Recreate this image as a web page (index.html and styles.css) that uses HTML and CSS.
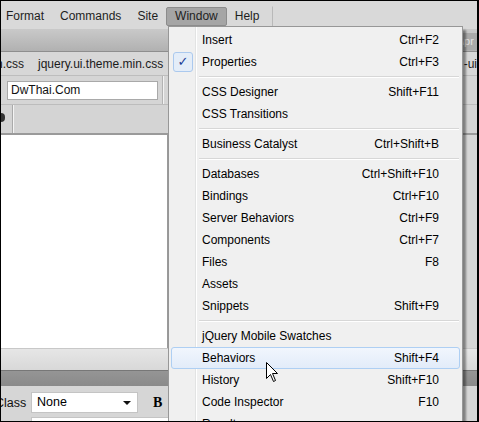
FILE: index.html
```html
<!DOCTYPE html>
<html lang="en">
<head>
    <meta charset="UTF-8">
    <title>Window menu</title>
    <link rel="stylesheet" href="styles.css">
</head>
<body>
    <div class="screen">
        <div class="menubar">
            <span class="top-item first">Format</span>
            <span class="top-item">Commands</span>
            <span class="top-item">Site</span>
            <span class="top-item open">Window</span>
            <span class="top-item last">Help</span>
        </div>

        <div class="toolbar">
            <span class="path-tab">\pr</span>
        </div>

        <div class="tabs">
            <span class="tab cut">n.css</span>
            <span class="tab">jquery.ui.theme.min.css</span>
            <span class="tab-spacer"></span>
            <span class="tab right">-ui-</span>
        </div>

        <div class="address">
            <div class="title-box">DwThai.Com</div>
            <div class="address-rest"></div>
        </div>

        <div class="tools">
            <span class="gear"></span>
            <span class="tools-rest"></span>
        </div>

        <div class="document"></div>

        <div class="statusbar"></div>
        <div class="panel-head"></div>

        <div class="props">
            <div class="props-row">
                <span class="lbl">Class</span>
                <div class="select">None <span class="arrow"></span></div>
                <span class="bold-btn">B</span>
            </div>
            <div class="props-row">
                <span class="lbl"></span>
                <div class="field"></div>
            </div>
        </div>

        <!-- dropdown for the Window menu -->
        <div class="dropdown">
            <div class="item"><span class="label">Insert</span><span class="key">Ctrl+F2</span></div>
            <div class="item"><span class="check">&#10003;</span><span class="label">Properties</span><span class="key">Ctrl+F3</span></div>
            <div class="sep"></div>
            <div class="item"><span class="label">CSS Designer</span><span class="key">Shift+F11</span></div>
            <div class="item"><span class="label">CSS Transitions</span><span class="key"></span></div>
            <div class="sep"></div>
            <div class="item"><span class="label">Business Catalyst</span><span class="key">Ctrl+Shift+B</span></div>
            <div class="sep"></div>
            <div class="item"><span class="label">Databases</span><span class="key">Ctrl+Shift+F10</span></div>
            <div class="item"><span class="label">Bindings</span><span class="key">Ctrl+F10</span></div>
            <div class="item"><span class="label">Server Behaviors</span><span class="key">Ctrl+F9</span></div>
            <div class="item"><span class="label">Components</span><span class="key">Ctrl+F7</span></div>
            <div class="item"><span class="label">Files</span><span class="key">F8</span></div>
            <div class="item"><span class="label">Assets</span><span class="key"></span></div>
            <div class="item"><span class="label">Snippets</span><span class="key">Shift+F9</span></div>
            <div class="sep"></div>
            <div class="item"><span class="label">jQuery Mobile Swatches</span><span class="key"></span></div>
            <div class="item hover"><span class="label">Behaviors</span><span class="key">Shift+F4</span></div>
            <div class="item"><span class="label">History</span><span class="key">Shift+F10</span></div>
            <div class="item"><span class="label">Code Inspector</span><span class="key">F10</span></div>
            <div class="item"><span class="label">Results</span><span class="key">&#9656;</span></div>
        </div>

        <svg class="cursor" width="13" height="21" viewBox="0 0 13 21">
            <path d="M0.5 0.5 L0.5 16.5 L4.5 12.5 L7.5 19.5 L9.5 18.5 L6.5 11.5 L11.5 11.5 Z" fill="#fff" stroke="#000" stroke-width="1"/>
        </svg>
    </div>
</body>
</html>
```

FILE: styles.css
```css
* {
    margin: 0;
    padding: 0;
    box-sizing: border-box;
}

body {
    background: #000;
    font-family: 'Liberation Sans', Arial, sans-serif;
    font-size: 12px;
    color: #000;
}

.screen {
    position: relative;
    width: 479px;
    height: 422px;
    border-top: 1px solid #000;
    border-left: 1px solid #000;
    border-right: 2px solid #000;
    border-bottom: 1px solid #000;
    overflow: hidden;
    display: flex;
    flex-direction: column;
    background: #d6d6d6;
}

/* top menu bar */
.menubar {
    height: 28px;
    flex: none;
    display: flex;
    align-items: center;
    background: #d9d9d9;
    color: #1e1e1e;
}

.top-item {
    height: 19px;
    line-height: 17px;
    padding: 0 7px;
    border: 1px solid transparent;
    border-radius: 2px;
    margin-top: 3px;
}

.top-item.first {
    padding-left: 4px;
}

.top-item.open {
    padding: 0 8px;
    background: #a5a5a5;
    border-color: #8c8c8c;
}

.top-item.last {
    border-right: 1px solid #b9b9b9;
    border-radius: 0;
    height: 24px;
    line-height: 19px;
    padding-right: 13px;
    margin-top: 5px;
}

.toolbar {
    height: 23px;
    flex: none;
    background: linear-gradient(#c9c9c9, #b1b1b1);
    border-bottom: 1px solid #8e8e8e;
    display: flex;
    justify-content: flex-end;
    align-items: flex-end;
}

.path-tab {
    width: 16px;
    height: 17px;
    background: #a9a9a9;
    color: #e2e2e2;
    font-size: 11px;
    line-height: 16px;
    overflow: hidden;
    margin-bottom: 1px;
}

.tabs {
    height: 24px;
    flex: none;
    display: flex;
    align-items: center;
    background: #d7d7d7;
    border-bottom: 1px solid #bdbdbd;
    color: #1a1a1a;
}

.tab {
    padding: 0 10px 0 0;
}

.tab.cut {
    margin-left: -5px;
    padding-right: 14px;
}

.tab-spacer {
    flex: 1;
}

.tab.right {
    padding: 0 4px 0 0;
    margin-right: -8px;
}

.address {
    height: 29px;
    flex: none;
    display: flex;
    align-items: center;
    background: #d5d5d5;
    border-bottom: 1px solid #bcbcbc;
}

.title-box {
    width: 151px;
    height: 19px;
    margin-left: 6px;
    background: #fff;
    border: 1px solid #a9a9a9;
    padding-left: 3px;
    line-height: 17px;
    color: #111;
}

.address-rest {
    flex: 1;
    height: 100%;
    margin-left: 5px;
    border-left: 1px solid #f2f2f2;
    box-shadow: -1px 0 0 #b3b3b3;
}

.tools {
    height: 30px;
    flex: none;
    display: flex;
    background: #d4d4d4;
    border-bottom: 2px solid #9a9a9a;
}

.gear {
    width: 4px;
    height: 9px;
    margin-top: 8px;
    background: #333;
    border-radius: 0 4px 4px 0;
}

.tools-rest {
    flex: 1;
    margin-left: 8px;
    border-left: 1px solid #f4f4f4;
    box-shadow: -1px 0 0 #aaa;
}

.document {
    flex: 1;
    background: #fff;
    border-right: 1px solid #9a9a9a;
    margin-right: 309px;
}

.statusbar {
    height: 22px;
    flex: none;
    background: linear-gradient(#e6e6e6, #d8d8d8);
    border-top: 1px solid #c8c8c8;
}

.panel-head {
    height: 16px;
    flex: none;
    background: linear-gradient(#959595, #8a8a8a);
    border-top: 1px solid #777;
}

.props {
    height: 35px;
    flex: none;
    background: #d6d6d6;
    padding-top: 6px;
}

.props-row {
    display: flex;
    align-items: center;
    height: 21px;
    margin-bottom: 4px;
}

.lbl {
    width: 36px;
    margin-left: -6px;
    color: #111;
    font-size: 12.5px;
}

.select {
    width: 107px;
    height: 21px;
    background: #fff;
    border: 1px solid #c4c4c4;
    padding-left: 5px;
    line-height: 19px;
    position: relative;
    font-size: 12.5px;
}

.arrow {
    position: absolute;
    right: 6px;
    top: 8px;
    border-left: 4px solid transparent;
    border-right: 4px solid transparent;
    border-top: 4px solid #111;
}

.bold-btn {
    margin-left: 15px;
    font-family: 'Liberation Serif', serif;
    font-weight: bold;
    font-size: 14px;
}

.field {
    width: 140px;
    height: 21px;
    background: #fff;
    border: 1px solid #c4c4c4;
}

/* open Window menu */
.dropdown {
    position: absolute;
    left: 167px;
    top: 25px;
    width: 295px;
    padding: 2px;
    background: #f0f0f0 linear-gradient(to right, #f0f0f0 26px, #e2e3e3 26px, #e2e3e3 27px, #fff 27px, #fff 28px, #f0f0f0 28px);
    border: 1px solid #979797;
    box-shadow: 4px 3px 2px -1px rgba(0, 0, 0, 0.4);
}

.item {
    position: relative;
    display: flex;
    height: 22px;
    align-items: center;
    padding-left: 30px;
    padding-right: 20px;
    border: 1px solid transparent;
    border-radius: 3px;
}

.label {
    flex: 1;
}

.key {
    text-align: right;
}

.item.hover {
    background: linear-gradient(#f1f6fd, #e2ecf9);
    border-color: #aecff3;
}

.check {
    position: absolute;
    left: 1px;
    top: 0;
    width: 20px;
    height: 20px;
    border: 1px solid #abc9ee;
    border-radius: 3px;
    background: #e4edf8;
    color: #1b3f95;
    font-size: 13px;
    line-height: 18px;
    text-align: center;
    font-family: 'DejaVu Sans', sans-serif;
}

.sep {
    height: 1px;
    margin: 3px 1px 4px 28px;
    background: #d7d7d7;
    box-shadow: 0 1px 0 #fff;
}

.cursor {
    position: absolute;
    left: 265px;
    top: 361px;
}
```
